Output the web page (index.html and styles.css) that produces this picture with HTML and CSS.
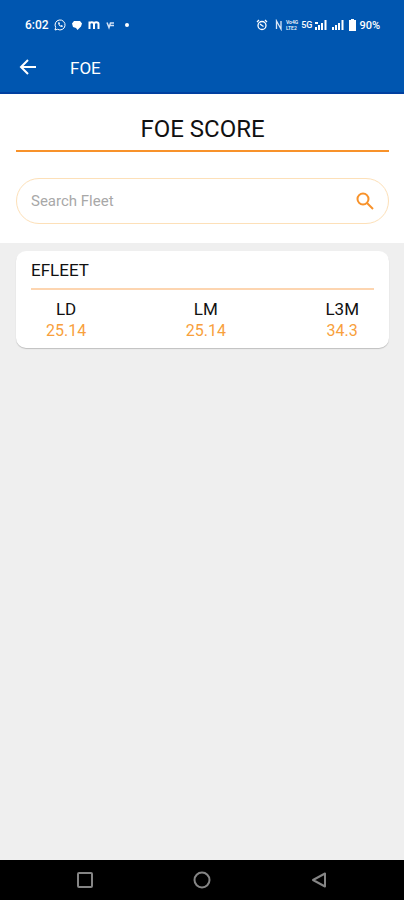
FILE: index.html
```html
<!DOCTYPE html>
<html lang="en">
<head>
    <meta charset="UTF-8">
    <meta name="viewport" content="width=device-width, initial-scale=1.0">
    <title>FOE</title>
    <link rel="stylesheet" href="styles.css">
</head>
<body>
    <header class="top">
        <div class="status-bar">
            <div class="status-left">
                <span class="time">6:02</span>
                <svg width="12" height="12" viewBox="0 0 12 12" fill="none" stroke="#fff">
                    <path d="M1 11l.7-2.6A5 5 0 1 1 3.600 10.300z"/>
                    <path d="M4 3.500c0 2.500 2 4.500 4.500 4.500l.3-1.300-1.500-.6-.7.600-1.200-1.200.6-.8-.6-1.400z" fill="#fff" stroke="none"/>
                </svg>
                <svg width="12" height="12" viewBox="0 0 12 12" fill="#fff">
                    <path d="M3 2h6l2 2.500-1 3L6.500 11 5 9 2 8 1 4.500z"/>
                </svg>
                <svg width="12" height="12" viewBox="0 0 12 12" fill="none" stroke="#fff" stroke-width="2">
                    <path d="M1.500 10V2.500M1.500 5c0-2.500 4.500-2.500 4.500 0v5M6 5c0-2.500 4.500-2.500 4.500 0v5"/>
                </svg>
                <svg width="12" height="12" viewBox="0 0 12 12" fill="none" stroke="#cfe0f5" stroke-width="1.500">
                    <path d="M2 3.500l2 5L5.500 4H9M5 6.500h4"/>
                </svg>
                <svg width="12" height="12" viewBox="0 0 12 12" fill="#fff">
                    <circle cx="5" cy="6" r="2"/>
                </svg>
            </div>
            <div class="status-right">
                <svg class="alarm" width="12" height="12" viewBox="0 0 12 12" fill="none" stroke="#fff" stroke-width="1.300">
                    <circle cx="6" cy="6.500" r="4"/>
                    <path d="M1 3l2-2M11 3L9 1M4 5l2 1.500 1.500 1"/>
                </svg>
                <svg width="8" height="12" viewBox="0 0 8 12" fill="none" stroke="#dbe8f8" stroke-width="1.300">
                    <path d="M1.500 10V2l4.500 8V2"/>
                </svg>
                <span class="volte"><span>Vo4G</span><span>LTE2</span></span>
                <span class="net">5G</span>
                <svg width="12" height="12" viewBox="0 0 12 12" fill="#fff">
                    <path d="M0 8h2v3H0zM3 6h2v5H3zM6 4h2v7H6zM9.500 1h2v10h-2zM0 3h3v2H0z"/>
                </svg>
                <svg class="signal" width="12" height="12" viewBox="0 0 12 12" fill="#fff">
                    <path d="M0 8h2v3H0zM3 6h2v5H3zM6 4h2v7H6zM9.500 1h2v10h-2z"/>
                </svg>
                <svg width="7" height="12" viewBox="0 0 7 12" fill="#fff">
                    <path d="M2 0h3v1h2v11H0V1h2z"/>
                </svg>
                <span>90%</span>
            </div>
        </div>
        <div class="app-bar">
            <button class="back" type="button" aria-label="Back">
                <svg width="20" height="20" viewBox="0 0 20 20" fill="none" stroke="#fff" stroke-width="2">
                    <path d="M18 9H4M10 2L3 9l7 7"/>
                </svg>
            </button>
            <span class="app-title">FOE</span>
        </div>
    </header>

    <section class="heading">
        <h1>FOE SCORE</h1>
        <form class="search">
            <input type="text" placeholder="Search Fleet" aria-label="Search Fleet">
            <button type="button" aria-label="Search">
                <svg width="18" height="18" viewBox="0 0 18 18" fill="none" stroke="#f8922a" stroke-width="2">
                    <circle cx="7" cy="7" r="5.500"/>
                    <path d="M11 11l6 6"/>
                </svg>
            </button>
        </form>
    </section>

    <main>
        <article class="card">
            <h2>EFLEET</h2>
            <dl class="scores">
                <div>
                    <dt>LD</dt>
                    <dd>25.14</dd>
                </div>
                <div>
                    <dt>LM</dt>
                    <dd>25.14</dd>
                </div>
                <div>
                    <dt>L3M</dt>
                    <dd>34.3</dd>
                </div>
            </dl>
        </article>
    </main>

    <nav class="nav-bar">
        <button type="button" aria-label="Recent apps">
            <svg width="20" height="20" viewBox="0 0 20 20" fill="none" stroke="#858585" stroke-width="2">
                <rect x="3" y="3" width="14" height="14" rx="1"/>
            </svg>
        </button>
        <button type="button" aria-label="Home">
            <svg width="20" height="20" viewBox="0 0 20 20" fill="none" stroke="#858585" stroke-width="2">
                <circle cx="10" cy="10" r="7.500"/>
            </svg>
        </button>
        <button type="button" aria-label="Back">
            <svg width="20" height="20" viewBox="0 0 20 20" fill="none" stroke="#858585" stroke-width="2" stroke-linejoin="round">
                <path d="M16 3.500v13L4 10z"/>
            </svg>
        </button>
    </nav>
</body>
</html>
```

FILE: styles.css
```css
* {
    box-sizing: border-box;
}
body {
    margin: 0;
    min-height: 100vh;
    display: flex;
    flex-direction: column;
    font-family: Roboto, sans-serif;
    font-size: 16px;
    background-color: #efefef;
    color: #111;
}
h1, h2, dl, dd {
    margin: 0;
    font-weight: 400;
}
button {
    display: flex;
    padding: 0;
    border: none;
    background: none;
    cursor: pointer;
}
svg {
    display: block;
    flex: none;
}
.top {
    background-color: #0056b0;
    border-bottom: 2px solid #0040a0;
    color: white;
}
.status-bar {
    display: flex;
    justify-content: space-between;
    height: 44px;
    padding: 6px 24px 0 25px;
    font-size: 11px;
    font-weight: 500;
}
.status-left, .status-right {
    display: flex;
    align-items: center;
}
.status-left {
    gap: 5px;
}
.time {
    font-size: 12px;
}
.status-right {
    gap: 3px;
}
.alarm {
    margin-right: 4px;
}
.volte {
    display: flex;
    flex-direction: column;
    font-size: 5px;
    line-height: 6px;
}
.net {
    font-size: 9px;
}
.signal {
    margin: 0 2px;
}
.app-bar {
    display: flex;
    align-items: center;
    gap: 32px;
    height: 48px;
    padding: 0 18px;
}
.app-title {
    font-size: 17px;
}
.heading {
    padding: 20px 15px 19px 16px;
    background-color: white;
}
h1 {
    padding-bottom: 6px;
    border-bottom: 2px solid #f8922a;
    font-size: 24px;
    line-height: 30px;
    text-align: center;
}
.search {
    display: flex;
    align-items: center;
    height: 46px;
    margin-top: 26px;
    padding: 0 14px;
    border: 1px solid #fde0b8;
    border-radius: 23px;
}
.search input {
    flex: 1;
    min-width: 0;
    padding: 0;
    border: none;
    outline: none;
    background: none;
    font-family: inherit;
    font-size: 15px;
    color: #111;
}
.search input::placeholder {
    color: #a8a8a8;
}
main {
    flex: 1;
    padding: 8px 15px 8px 16px;
}
.card {
    padding: 8px 15px 6px;
    border-radius: 10px;
    background-color: white;
    box-shadow: 0 1px 1px rgba(0,0,0,0.2);
}
h2 {
    padding-bottom: 7px;
    border-bottom: 2px solid #fdd5b0;
    font-size: 17px;
    line-height: 22px;
}
.scores {
    display: flex;
    justify-content: space-between;
    padding: 8px 15px 0;
    line-height: 22px;
    text-align: center;
}
.scores dt {
    font-size: 17px;
}
.scores dd {
    color: #f8a03c;
}
.nav-bar {
    display: flex;
    justify-content: space-between;
    align-items: center;
    height: 40px;
    padding: 0 75px;
    background-color: black;
}
```
